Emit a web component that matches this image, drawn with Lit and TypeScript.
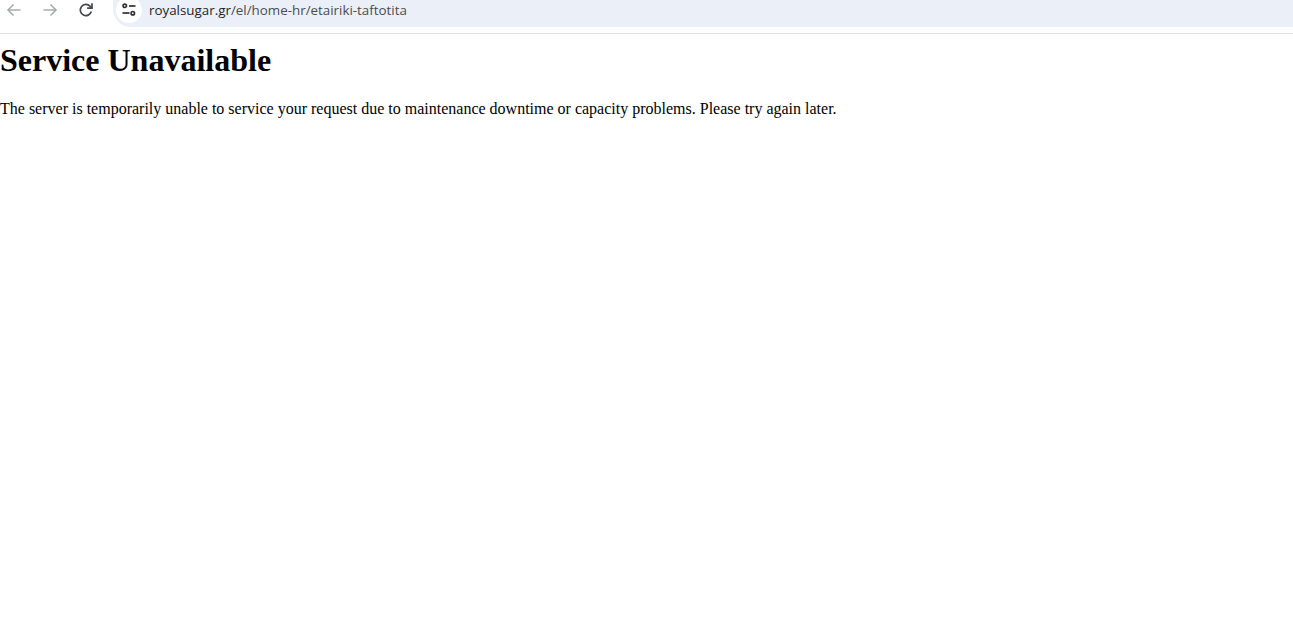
import { LitElement, html, css } from "lit";
import { customElement } from "lit/decorators.js";

@customElement("app-root")
export class AppRoot extends LitElement {
  static styles = css`
    :host { display: block; background: #fff; min-height: 637px; font-family: "Liberation Serif", "Times New Roman", serif; color: #000; }
    .toolbar { display: flex; align-items: flex-start; height: 33px; border-bottom: 1px solid #dfdfdf; box-sizing: content-box; background: #fff; }
    .nav { display: flex; width: 113px; flex: none; padding-left: 5px; box-sizing: border-box; gap: 18px; padding-top: 1px; }
    .nav svg { width: 18px; height: 18px; display: block; flex: none; }
    .omnibox { flex: 1; height: 27px; background: #ebf0f8; border-bottom-left-radius: 18px; display: flex; align-items: flex-start; padding-left: 3px; }
    .tune { width: 26px; height: 26px; margin-top: -3px; border-radius: 50%; background: #fff; display: flex; align-items: center; justify-content: center; flex: none; }
    .tune svg { width: 16px; height: 16px; display: block; }
    .url { margin-left: 7px; font: 13.36px/20px "Open Sans", "Noto Sans", sans-serif; color: #4a4c4f; white-space: nowrap; }
    .url b { font-weight: 400; color: #1f1f1f; }
    main { display: block; }
    h1 { font-size: 32px; font-weight: 700; margin: 0; padding-top: 8px; line-height: 37px; }
    p { font-size: 16px; line-height: 18px; margin: 21px 0 0; }
  `;

  render() {
    return html`
      <div class="toolbar">
        <div class="nav">
          <svg viewBox="0 0 18 18" fill="none" stroke="#a8abaf" stroke-width="1.6"><path d="M15.5 9H3M8.5 3.5 3 9l5.500 5.500"/></svg>
          <svg viewBox="0 0 18 18" fill="none" stroke="#a8abaf" stroke-width="1.6"><path d="M2.500 9H15M9.500 3.500 15 9l-5.500 5.500"/></svg>
          <svg viewBox="0 0 18 18" fill="none" stroke="#46484b" stroke-width="1.700"><path d="M14.300 10.500A5.600 5.600 0 1 1 13 5.200L14.800 7"/><path d="M15 2.300V7.200H10.100" /></svg>
        </div>
        <div class="omnibox">
          <div class="tune">
            <svg viewBox="0 0 16 16" fill="none" stroke="#2f3033" stroke-width="1.700">
              <circle cx="3.800" cy="3.800" r="1.700"/><path d="M8 4h6.500"/>
              <circle cx="11.800" cy="11.200" r="1.700"/><path d="M1.500 11h7"/>
            </svg>
          </div>
          <div class="url"><b>royalsugar.gr</b>/el/home-hr/etairiki-taftotita</div>
        </div>
      </div>
      <main>
        <h1>Service Unavailable</h1>
        <p>The server is temporarily unable to service your request due to maintenance downtime or capacity problems. Please try again later.</p>
      </main>
    `;
  }
}
